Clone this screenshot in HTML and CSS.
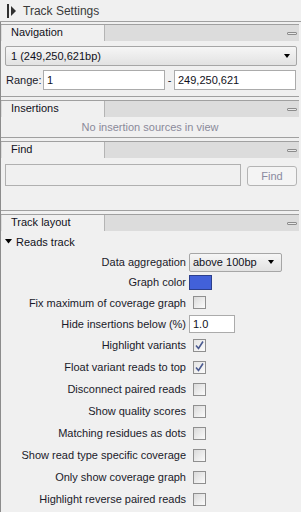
FILE: index.html
```html
<!DOCTYPE html>
<html>
<head>
<meta charset="utf-8">
<link rel="stylesheet" href="styles.css">
</head>
<body>
<div class="title">
  <svg class="title-icon" width="10" height="14" viewBox="0 0 10 14"><rect x="0" y="0" width="2" height="14" fill="#303030"/><polygon points="4,2 9,7 4,12" fill="#303030"/></svg>
  <span>Track Settings</span>
</div>
<div class="main">
  <section class="panel">
    <div class="phead"><div class="tab">Navigation</div><div class="fill"><span class="minbtn"></span></div></div>
    <div class="nav-body">
      <div class="combo wide"><span>1 (249,250,621bp)</span><span class="arrow"></span></div>
      <div class="range">
        <span class="range-label">Range:</span>
        <span class="input r1">1</span>
        <span class="dash">-</span>
        <span class="input r2">249,250,621</span>
      </div>
    </div>
  </section>
  <section class="panel">
    <div class="phead"><div class="tab">Insertions</div><div class="fill"><span class="minbtn"></span></div></div>
    <div class="ins-body">No insertion sources in view</div>
  </section>
  <section class="panel">
    <div class="phead"><div class="tab">Find</div><div class="fill"><span class="minbtn"></span></div></div>
    <div class="find-body">
      <span class="input find-input"></span>
      <span class="btn">Find</span>
    </div>
  </section>
  <section class="panel last">
    <div class="phead"><div class="tab">Track layout</div><div class="fill"><span class="minbtn"></span></div></div>
    <div class="group"><svg width="7" height="5" viewBox="0 0 7 5"><polygon points="0,0 7,0 3.5,4.5" fill="#000"/></svg><span>Reads track</span></div>
    <div class="settings">
      <label>Data aggregation</label><div class="combo small"><span>above 100bp</span><span class="arrow"></span></div>
      <label>Graph color</label><div class="swatch"></div>
      <label>Fix maximum of coverage graph</label><div class="cb"></div>
      <label>Hide insertions below (%)</label><span class="input pct">1.0</span>
      <label>Highlight variants</label><div class="cb checked"><svg width="11" height="11" viewBox="0 0 11 11"><path d="M2 5.5 L4.5 8.5 L9 1.5" fill="none" stroke="#4a5a90" stroke-width="1.6"/></svg></div>
      <label>Float variant reads to top</label><div class="cb checked"><svg width="11" height="11" viewBox="0 0 11 11"><path d="M2 5.5 L4.5 8.5 L9 1.5" fill="none" stroke="#4a5a90" stroke-width="1.6"/></svg></div>
      <label>Disconnect paired reads</label><div class="cb"></div>
      <label>Show quality scores</label><div class="cb"></div>
      <label>Matching residues as dots</label><div class="cb"></div>
      <label>Show read type specific coverage</label><div class="cb"></div>
      <label>Only show coverage graph</label><div class="cb"></div>
      <label>Highlight reverse paired reads</label><div class="cb"></div>
    </div>
  </section>
</div>
</body>
</html>
```
FILE: styles.css
```css
* { box-sizing: border-box; }
html, body { margin: 0; padding: 0; }
body {
  width: 301px;
  height: 512px;
  overflow: hidden;
  background: #f0f0f0;
  font-family: "Liberation Sans", Arial, sans-serif;
  font-size: 11px;
  color: #1a1a2a;
}
.title {
  height: 22px;
  display: flex;
  align-items: center;
  padding-left: 7px;
  gap: 6px;
  border-bottom: 1px solid #a0a0a0;
  color: #3a3a3a;
  font-size: 12px;
}
.title-icon { margin-top: 1px; }
.main {
  border-left: 1px solid #8c8c8c;
  width: 299px;
  height: 490px;
  padding-top: 2px;
}
.panel {
  border-top: 1px solid #a0a0a0;
  border-bottom: 1px solid #a0a0a0;
  margin-bottom: 3px;
}
.panel.last { border-bottom: none; }
.phead {
  height: 16px;
  display: flex;
  background: #dcdcdc;
  padding-left: 1px;
}
.tab {
  width: 103px;
  background: #f0f0f0;
  border-right: 1px solid #b4b4b4;
  padding-left: 9px;
  line-height: 15px;
  color: #101020;
}
.fill {
  flex: 1;
  display: flex;
  justify-content: flex-end;
  align-items: center;
  padding-right: 2px;
}
.minbtn {
  width: 10px;
  height: 3px;
  border: 1px solid #8c8c8c;
  background: #e8e8e8;
  border-radius: 1px;
}
.nav-body {
  padding: 5px 2px 6px 4px;
  display: flex;
  flex-direction: column;
  gap: 4px;
}
.combo {
  display: flex;
  align-items: center;
  justify-content: space-between;
  border: 1px solid #a6a6a6;
  border-radius: 2px;
  background: linear-gradient(#f6f6f6, #e2e2e2);
  color: #101020;
}
.combo.wide { height: 20px; padding: 0 6px 0 5px; }
.arrow {
  width: 0;
  height: 0;
  border-left: 3.5px solid transparent;
  border-right: 3.5px solid transparent;
  border-top: 4px solid #000;
}
.range {
  display: flex;
  align-items: center;
  height: 20px;
}
.range-label { width: 38px; padding-left: 1px; }
.input {
  display: flex;
  align-items: center;
  background: #fff;
  border: 1px solid #ababab;
  padding-left: 3px;
  color: #101020;
}
.r1 { width: 122px; height: 20px; }
.dash { width: 9px; text-align: center; }
.r2 { width: 122px; height: 20px; }
.ins-body {
  height: 20px;
  line-height: 20px;
  text-align: center;
  color: #8a8a9a;
}
.find-body {
  height: 52px;
  display: flex;
  align-items: flex-start;
  padding: 6px 2px 0 4px;
  gap: 6px;
}
.find-input {
  width: 236px;
  height: 22px;
  background: #f0f0f0;
  border-color: #b0b0b0;
}
.btn {
  margin-top: 2px;
  width: 50px;
  height: 20px;
  border: 1px solid #b4b4b4;
  border-radius: 3px;
  background: #f4f4f4;
  color: #8a8aa0;
  display: flex;
  align-items: center;
  justify-content: center;
}
.group {
  height: 21px;
  display: flex;
  align-items: center;
  gap: 4px;
  padding-left: 4px;
  color: #101020;
}
.settings {
  display: grid;
  grid-template-columns: 181px auto;
  grid-template-rows: 20px 20px 21px 21px repeat(8, 22px);
  column-gap: 3px;
  padding-left: 4px;
  align-items: center;
}
.settings label { text-align: right; white-space: nowrap; }
.combo.small {
  width: 93px;
  height: 19px;
  padding: 0 7px 0 3px;
}
.swatch {
  width: 23px;
  height: 15px;
  background: #4261d9;
  border: 1px solid #2c3f8c;
}
.cb {
  margin-left: 4px;
  width: 13px;
  height: 13px;
  border: 1px solid #8f8f8f;
  background: linear-gradient(135deg, #dadada, #fbfbfb);
  display: flex;
  align-items: center;
  justify-content: center;
}
.cb.checked { background: linear-gradient(135deg, #e4e4e4, #fbfbfb); }
.pct { width: 46px; height: 18px; }
```
